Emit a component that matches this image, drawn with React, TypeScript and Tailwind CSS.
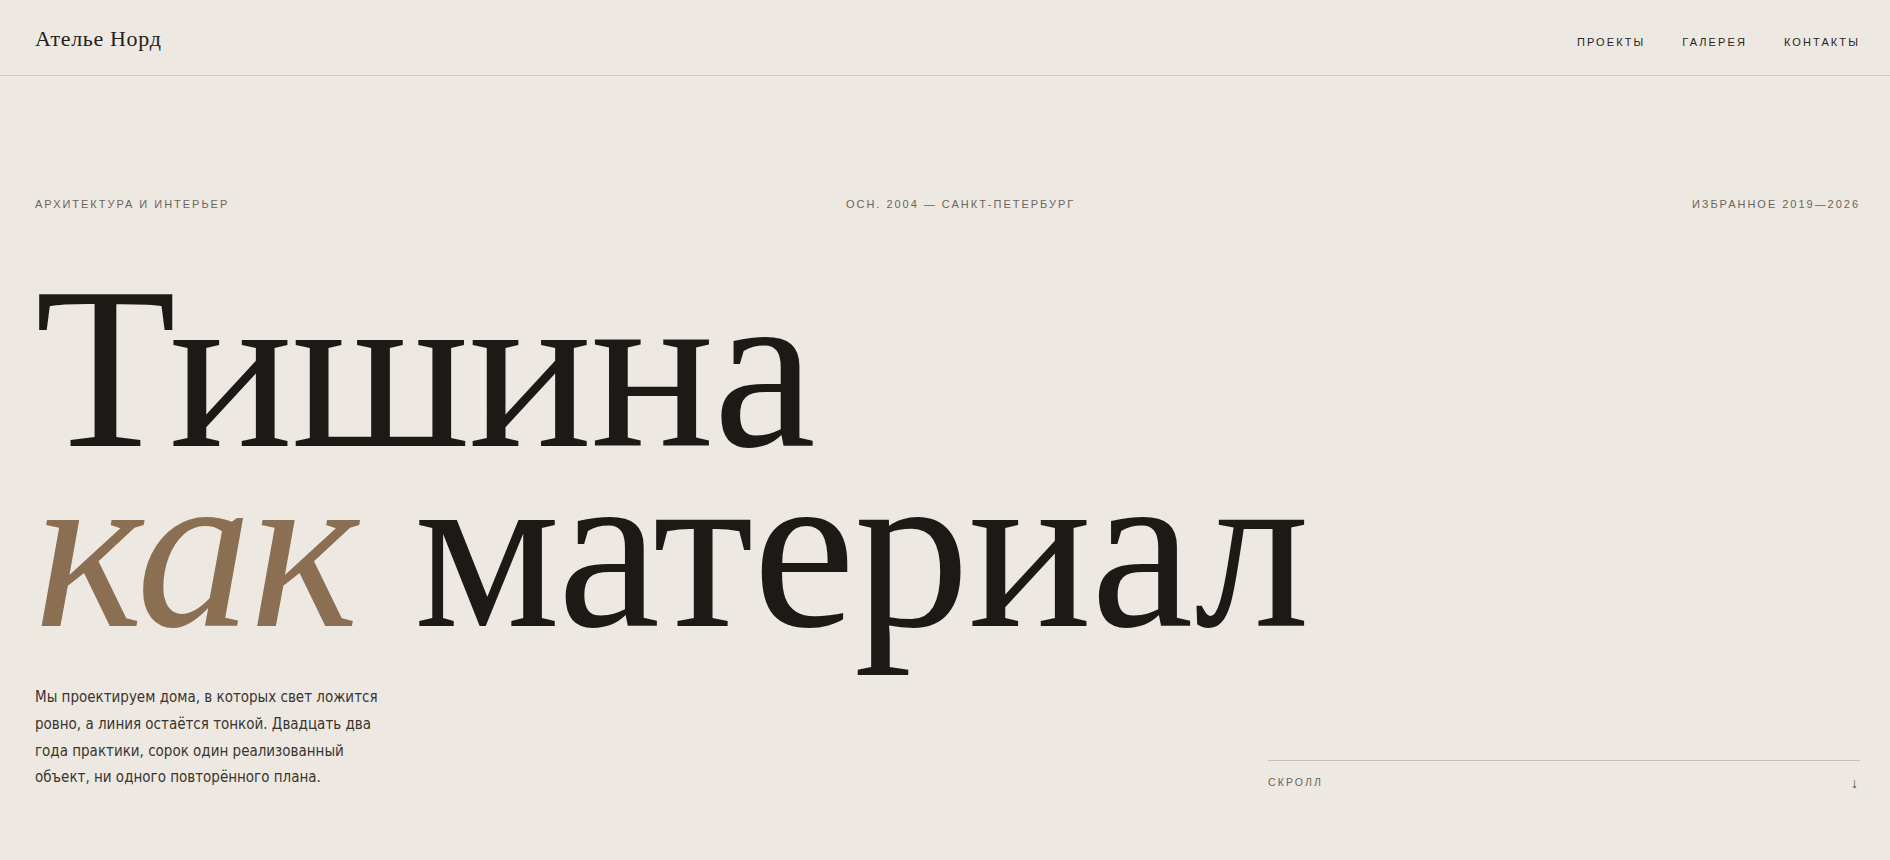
export default function App() {
  return (
    <div className="min-h-[860px] bg-[#ede8e2] text-[#1c1a17] font-['Liberation_Sans',Arial,sans-serif]">
      <header className="h-[76px] border-b border-[#cfc9c1] pl-[35px] pr-[30px] pt-[26px] flex items-baseline justify-between">
        <a className="font-['Liberation_Serif',Georgia,serif] text-[22px] leading-[26px] tracking-[0.03em] text-[#24211d]">
          Ателье Норд
        </a>
        <nav className="flex items-baseline gap-[37px] text-[11px] tracking-[0.19em] text-[#2a2622]">
          <a>ПРОЕКТЫ</a>
          <a>ГАЛЕРЕЯ</a>
          <a>КОНТАКТЫ</a>
        </nav>
      </header>

      <main className="pl-[35px] pr-[30px] pt-[120px]">
        <div className="flex justify-between text-[11px] leading-4 tracking-[0.18em] text-[#6b655f]">
          <span>АРХИТЕКТУРА И ИНТЕРЬЕР</span>
          <span>ОСН. 2004 — САНКТ-ПЕТЕРБУРГ</span>
          <span>ИЗБРАННОЕ 2019—2026</span>
        </div>

        <h1 className="mt-[66px] font-['Liberation_Serif','Times_New_Roman',serif] text-[231px] leading-[180px] tracking-[-0.005em] font-normal">
          <span className="block">Тишина</span>
          <span className="block">
            <em className="text-[#8b6f52]">как</em> материал
          </span>
        </h1>

        <div className="mt-[46px] flex items-end justify-between">
          <p className="max-w-[352px] font-['DejaVu_Sans_Condensed',Roboto,sans-serif] text-[15px] leading-[26.8px] text-[#3a3530]">
            Мы проектируем дома, в которых свет ложится ровно, а линия остаётся тонкой. Двадцать два года практики, сорок один реализованный объект, ни одного повторённого плана.
          </p>
          <div className="w-[592px] border-t border-[#c5bfb7] pt-[14px] flex items-center justify-between text-[10.5px] tracking-[0.2em] text-[#6b655f]">
            <span>СКРОЛЛ</span>
            <span className="text-[14px] leading-4 tracking-normal pr-[2px] text-[#4a443e]">↓</span>
          </div>
        </div>
      </main>
    </div>
  );
}
